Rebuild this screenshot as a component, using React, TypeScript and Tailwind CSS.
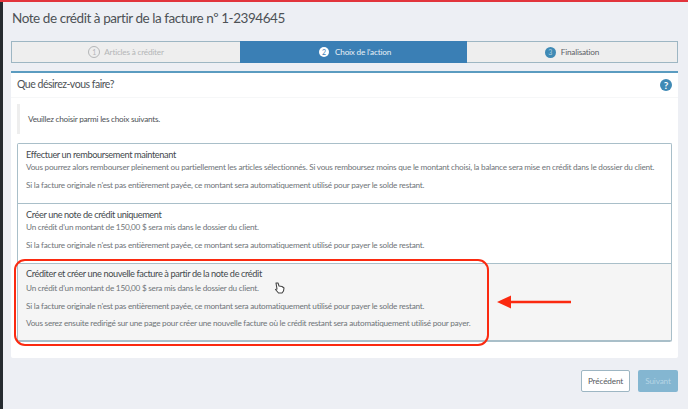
import React from "react";

function Option({ title, lines, active }: { title: string; lines: string[]; active?: boolean }) {
  return (
    <div className={`flex flex-col px-[8px] border-[#a9bfc9] ${active ? "bg-[#f5f5f5] pt-[3px] pb-[12px] border-b-2" : "bg-white pt-[4px] pb-[13.5px] border-b"}`}>
      <div className={`text-[9.2px] tracking-[-0.38px] leading-[14px] text-[#44494d] ${active ? "mb-[2px]" : "mb-[0px]"}`}>{title}</div>
      <div className="flex flex-col gap-[7.5px]">
        {lines.map((l) => (
          <p key={l} className="text-[8.2px] tracking-[-0.24px] leading-[10px] text-[#6f7478] whitespace-nowrap">{l}</p>
        ))}
      </div>
    </div>
  );
}

const si = "Si la facture originale n'est pas entièrement payée, ce montant sera automatiquement utilisé pour payer le solde restant.";
const un = "Un crédit d'un montant de 150,00 $ sera mis dans le dossier du client.";

export default function App() {
  return (
    <div className="relative w-[688px] h-[409px] overflow-hidden bg-[#edeff4] flex flex-col font-['Lato','Liberation_Sans',sans-serif]">
      <div className="h-[2px] bg-[#e2343c] shrink-0" />
      <div className="flex-1 min-h-0 flex">
        <div className="w-[3px] bg-[#262b30] shrink-0" />
        <div className="flex-1 min-w-0 flex flex-col pl-[8px] pr-[10px]">
          <h1 className="mt-[6px] text-[13.5px] tracking-[-0.44px] leading-[20px] pl-[1px] text-[#4d5256] font-normal whitespace-nowrap">Note de crédit à partir de la facture nº 1-2394645</h1>

          <div className="mt-[13px] h-[22px] flex border border-[#9db6c3] bg-[#eeeeee] text-[8.2px] tracking-[-0.2px]">
            <div className="w-[228px] flex items-center justify-center gap-[4px] text-[#b4b6b8]">
              <span className="w-[12px] h-[12px] rounded-full border border-[#b4b6b8] flex items-center justify-center text-[7px] leading-none">1</span>
              Articles à créditer
            </div>
            <div className="w-[227px] -my-px flex items-center justify-center gap-[6px] bg-[#3a7fb5] text-[#e8f0f6] pl-[3px]">
              <span className="w-[10px] h-[10px] rounded-full bg-white text-[#3a7fb5] flex items-center justify-center text-[7px] leading-none">2</span>
              Choix de l'action
            </div>
            <div className="flex-1 flex items-center justify-center gap-[5px] text-[#5c6166]">
              <span className="w-[11px] h-[11px] rounded-full bg-[#3f8ab5] text-[#a9cfe3] flex items-center justify-center text-[7px] leading-none">3</span>
              Finalisation
            </div>
          </div>

          <div className="mt-[8px] h-[287px] bg-white border-t-2 border-[#5b9cc0] rounded-b-[2px] flex flex-col">
            <div className="h-[25px] flex items-center justify-between px-[6px] border-b border-[#f6f7f8]">
              <span className="text-[10.5px] tracking-[-0.48px] text-[#4d5256]">Que désirez-vous faire?</span>
              <span className="w-[12px] h-[12px] rounded-full bg-[#3f8ab5] text-white flex items-center justify-center text-[10px] font-bold leading-none">?</span>
            </div>
            <div className="ml-[6px] mt-[6px] h-[30px] border-l-[3px] border-[#eeeeee] pl-[8px] flex items-center text-[8.2px] tracking-[-0.24px] text-[#4d5256]">
              Veuillez choisir parmi les choix suivants.
            </div>
            <div className="mx-[6px] mt-[9px] border border-b-0 border-[#a9bfc9] rounded-[2px] overflow-hidden">
              <Option
                title="Effectuer un remboursement maintenant"
                lines={[
                  "Vous pourrez alors rembourser pleinement ou partiellement les articles sélectionnés. Si vous remboursez moins que le montant choisi, la balance sera mise en crédit dans le dossier du client.",
                  si,
                ]}
              />
              <Option title="Créer une note de crédit uniquement" lines={[un, si]} />
              <Option
                active
                title="Créditer et créer une nouvelle facture à partir de la note de crédit"
                lines={[
                  un,
                  si,
                  "Vous serez ensuite redirigé sur une page pour créer une nouvelle facture où le crédit restant sera automatiquement utilisé pour payer.",
                ]}
              />
            </div>
          </div>

          <div className="mt-[12px] flex justify-end gap-[8px] text-[8.2px] tracking-[-0.15px]">
            <div className="w-[49px] h-[22px] bg-white border border-[#9db6c3] rounded-[2px] flex items-center justify-center text-[#55595d]">Précédent</div>
            <div className="w-[40px] h-[22px] bg-[#84b6d1] rounded-[2px] flex items-center justify-center text-[#b5d5e5]">Suivant</div>
          </div>
        </div>
      </div>

      <div className="absolute left-[14px] top-[259px] w-[475px] h-[87px] border-[2.5px] border-[#fb2a10] rounded-[11px]" />
      <svg className="absolute left-[496px] top-[294px]" width="77" height="16" viewBox="0 0 77 16">
        <path d="M1 8 L15 1.5 L15 6.8 L75 6.8 L75 9.2 L15 9.2 L15 14.5 Z" fill="#fb2a10" />
      </svg>
      <svg className="absolute left-[274px] top-[282px]" width="11" height="12" viewBox="0 0 11 12">
        <path d="M2 1 L4 1 L5 4 L8 4.5 L10 6 L9.5 9 L8 11 L4.5 11 L1.5 7.5 L3 7 Z" fill="#fff" stroke="#444" strokeWidth="1.1" strokeLinejoin="round" />
      </svg>
    </div>
  );
}
